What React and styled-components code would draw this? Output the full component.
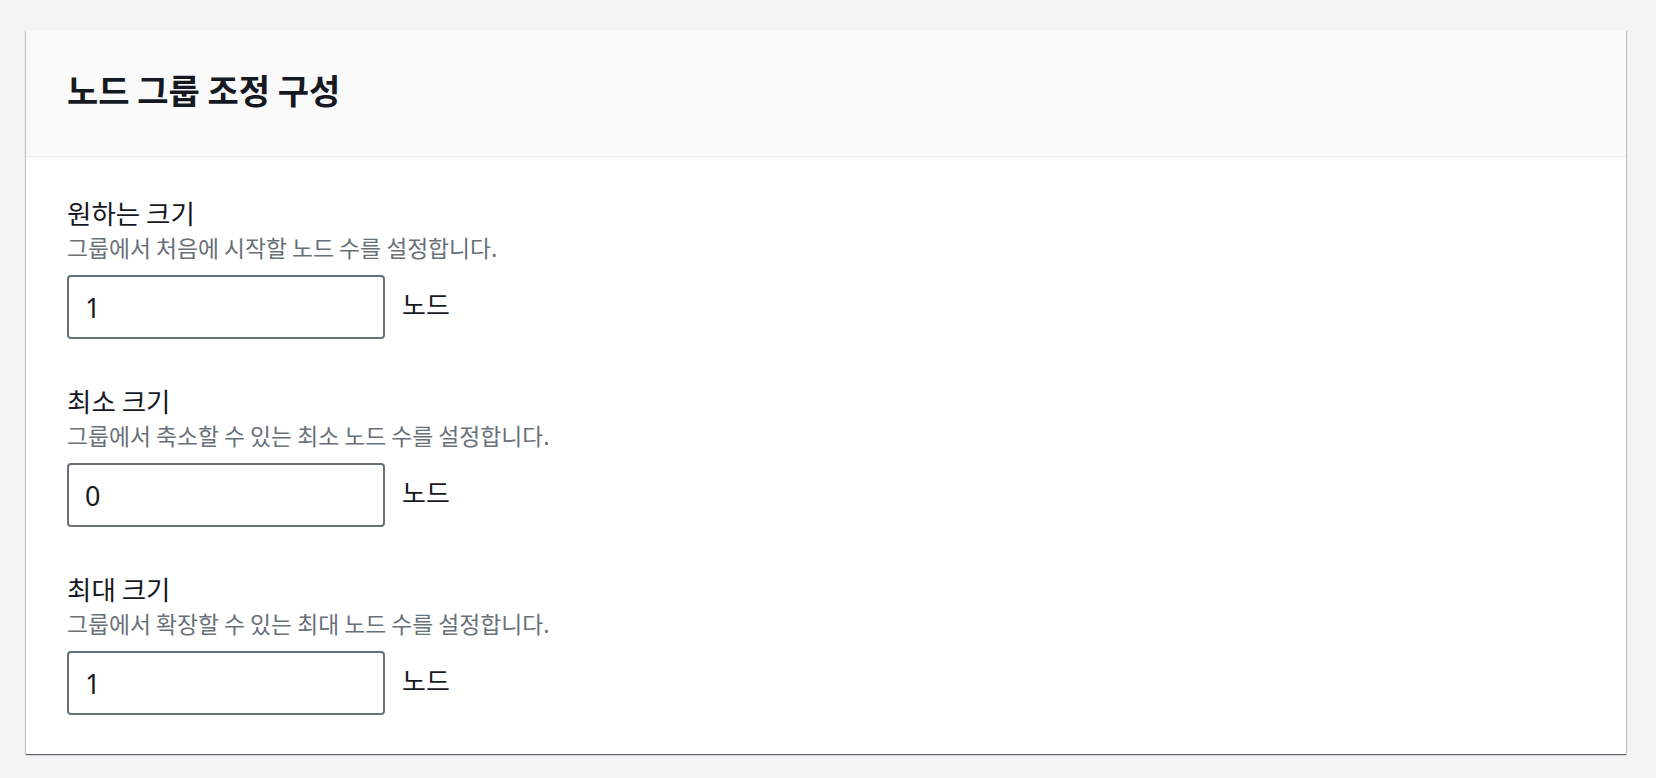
import React from "react";
import styled, { createGlobalStyle } from "styled-components";

const GlobalStyle = createGlobalStyle`
  html, body {
    margin: 0;
    padding: 0;
    background: #f2f3f3;
    font-family: "Noto Sans CJK KR", "Noto Sans", sans-serif;
    color: #16191f;
  }
`;

const fields = [
  { label: "원하는 크기", desc: "그룹에서 처음에 시작할 노드 수를 설정합니다.", value: "1" },
  { label: "최소 크기", desc: "그룹에서 축소할 수 있는 최소 노드 수를 설정합니다.", value: "0" },
  { label: "최대 크기", desc: "그룹에서 확장할 수 있는 최대 노드 수를 설정합니다.", value: "1" },
];

export default function App() {
  return (
    <>
      <GlobalStyle />
      <Page>
        <Card>
          <Header>
            <Title>노드 그룹 조정 구성</Title>
          </Header>
          <Body>
            {fields.map((f) => (
              <Field key={f.label}>
                <Label>{f.label}</Label>
                <Desc>{f.desc}</Desc>
                <InputRow>
                  <Input type="text" defaultValue={f.value} />
                  <Unit>노드</Unit>
                </InputRow>
              </Field>
            ))}
          </Body>
        </Card>
      </Page>
    </>
  );
}

const Page = styled.div`
  padding: 30px 30px 24px 26px;
`;

const Card = styled.div`
  background: #ffffff;
  box-shadow: 0 1px 1px 0 rgba(0, 28, 36, 0.5), 1px 1px 1px 0 rgba(0, 28, 36, 0.15),
    -1px 1px 1px 0 rgba(0, 28, 36, 0.15);
`;

const Header = styled.div`
  background: #fafafa;
  border-bottom: 1px solid #eaeded;
  padding: 38px 41px 44px;
`;

const Title = styled.h2`
  margin: 0;
  font-size: 34px;
  line-height: 44px;
  font-weight: 700;
  color: #16191f;
`;

const Body = styled.div`
  display: flex;
  flex-direction: column;
  gap: 46px;
  padding: 40px 41px 39px;
`;

const Field = styled.div`
  display: flex;
  flex-direction: column;
`;

const Label = styled.div`
  font-size: 26.5px;
  line-height: 32px;
  color: #16191f;
`;

const Desc = styled.div`
  margin-top: 4px;
  font-size: 22.8px;
  line-height: 30px;
  color: #687078;
`;

const InputRow = styled.div`
  display: flex;
  align-items: center;
  gap: 17px;
  margin-top: 12px;
`;

const Input = styled.input`
  box-sizing: border-box;
  width: 318px;
  height: 64px;
  padding: 0 16px;
  border: 2px solid #687078;
  border-radius: 4px;
  font-family: "Noto Sans", "Noto Sans CJK KR", sans-serif;
  font-size: 27px;
  color: #16191f;
  background: #ffffff;
  outline: none;
`;

const Unit = styled.span`
  font-size: 26px;
  line-height: 32px;
  color: #16191f;
  margin-top: -6px;
`;
